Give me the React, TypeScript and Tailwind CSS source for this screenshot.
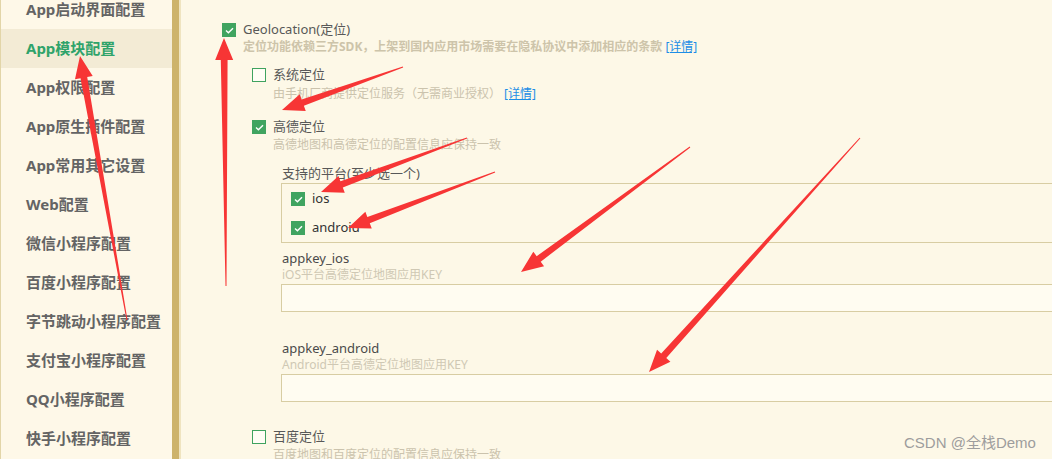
import React from 'react';

const menu = [
  'App启动界面配置',
  'App模块配置',
  'App权限配置',
  'App原生插件配置',
  'App常用其它设置',
  'Web配置',
  '微信小程序配置',
  '百度小程序配置',
  '字节跳动小程序配置',
  '支付宝小程序配置',
  'QQ小程序配置',
  '快手小程序配置',
];

// 红色标注箭头: [尾x, 尾y, 尖x, 尖y]
const arrows: number[][] = [
  [127, 320, 80, 56],
  [226, 286, 224, 38],
  [403, 67, 282, 110],
  [467, 138, 321, 192],
  [495, 172, 348, 228],
  [690, 147, 521, 272],
  [860, 138, 649, 372],
];

function arrowPoints(x1: number, y1: number, x2: number, y2: number) {
  const len = Math.hypot(x2 - x1, y2 - y1);
  const dx = (x2 - x1) / len;
  const dy = (y2 - y1) / len;
  const nx = -dy;
  const ny = dx;
  const headLen = 22;
  const headW = 9;
  const shaftW = 3.4;
  const bx = x2 - dx * headLen;
  const by = y2 - dy * headLen;
  const pts = [
    [x1 + nx * 0.5, y1 + ny * 0.5],
    [bx + nx * shaftW, by + ny * shaftW],
    [bx + nx * headW, by + ny * headW],
    [x2, y2],
    [bx - nx * headW, by - ny * headW],
    [bx - nx * shaftW, by - ny * shaftW],
    [x1 - nx * 0.5, y1 - ny * 0.5],
  ];
  return pts.map((p) => p.join(',')).join(' ');
}

function Check({ on }: { on: boolean }) {
  if (!on) {
    return <span className="block w-[14px] h-[14px] border border-[#3fa35f] bg-[#fffdf5] shrink-0" />;
  }
  return (
    <span className="flex items-center justify-center w-[14px] h-[14px] bg-[#40a460] shrink-0">
      <svg width="9" height="7" viewBox="0 0 9 7">
        <path d="M1 3.5 L3.4 5.8 L8 1.2" fill="none" stroke="#fff" strokeWidth="1.4" />
      </svg>
    </span>
  );
}

function Link() {
  return <span className="text-[#1d8ee6] underline ml-[3px] font-normal">[详情]</span>;
}

export default function App() {
  return (
    <div
      className="relative flex w-[1052px] h-[459px] overflow-hidden bg-[#fdf8e7] text-[13px]"
      style={{ fontFamily: '"Noto Sans", "Noto Sans CJK SC", sans-serif' }}
    >
      {/* 左侧菜单 */}
      <div className="w-[172px] shrink-0 border-l border-[#e2d5a8] bg-[#fef8e8]">
        <div className="-mt-[10px]">
          {menu.map((m, i) => (
            <div
              key={m}
              className={
                'h-[39px] flex items-center pl-[25px] text-[15px] font-bold ' +
                (i === 1 ? 'bg-[#f3ebd5] text-[#2fa36a]' : 'text-[#646464]')
              }
            >
              {m}
            </div>
          ))}
        </div>
      </div>
      <div className="w-[7px] shrink-0 bg-[#cdb36b]" />
      <div className="w-[2px] shrink-0 bg-[#efe4c0]" />

      {/* 主内容 */}
      <div className="flex-1 pt-[22px] pl-[41px] overflow-hidden">
        <div className="flex items-center gap-[7px] h-[16px] text-[#585858]">
          <Check on />
          <span>Geolocation(定位)</span>
        </div>
        <div className="ml-[21px] mt-[1px] h-[16px] leading-[16px] text-[12px] font-bold text-[#cdc4aa] whitespace-nowrap">
          定位功能依赖三方SDK，上架到国内应用市场需要在隐私协议中添加相应的条款
          <Link />
        </div>

        <div className="ml-[30px]">
          <div className="mt-[12px] flex items-center gap-[7px] h-[16px] text-[#585858]">
            <Check on={false} />
            <span>系统定位</span>
          </div>
          <div className="ml-[21px] mt-[3px] h-[16px] leading-[16px] text-[12px] text-[#cbc3ad] whitespace-nowrap">
            由手机厂商提供定位服务（无需商业授权）
            <Link />
          </div>

          <div className="mt-[17px] flex items-center gap-[7px] h-[16px] text-[#585858]">
            <Check on />
            <span>高德定位</span>
          </div>
          <div className="ml-[21px] mt-[2px] h-[16px] leading-[16px] text-[12px] text-[#cbc3ad] whitespace-nowrap">
            高德地图和高德定位的配置信息应保持一致
          </div>

          <div className="ml-[29px] w-[820px]">
            <div className="mt-[12px] h-[16px] leading-[16px] pl-[1px] text-[#585858]">支持的平台(至少选一个)</div>
            <div className="mt-[2px] border border-[#d8cda3] pt-[7px] pb-[6px] pl-[9px] flex flex-col gap-[13px]">
              <div className="flex items-center gap-[7px] h-[16px] text-[#333]">
                <Check on />
                <span>ios</span>
              </div>
              <div className="flex items-center gap-[7px] h-[16px] text-[#333]">
                <Check on />
                <span>android</span>
              </div>
            </div>

            <div className="mt-[7px] h-[16px] leading-[16px] pl-[1px] text-[#4a4a4a]">appkey_ios</div>
            <div className="mt-[1px] h-[16px] leading-[16px] pl-[1px] text-[12px] text-[#cfc8b4]">iOS平台高德定位地图应用KEY</div>
            <div className="mt-[1px] h-[28px] border border-[#d8cda3] bg-[#fffcf1]" />

            <div className="mt-[28px] h-[16px] leading-[16px] pl-[1px] text-[#4a4a4a]">appkey_android</div>
            <div className="mt-[1px] h-[16px] leading-[16px] pl-[1px] text-[12px] text-[#cfc8b4]">Android平台高德定位地图应用KEY</div>
            <div className="mt-[1px] h-[28px] border border-[#d8cda3] bg-[#fffcf1]" />
          </div>

          <div className="mt-[27px] flex items-center gap-[7px] h-[16px] text-[#585858]">
            <Check on={false} />
            <span>百度定位</span>
          </div>
          <div className="ml-[21px] mt-[2px] h-[16px] leading-[16px] text-[12px] text-[#cbc3ad] whitespace-nowrap">
            百度地图和百度定位的配置信息应保持一致
          </div>
        </div>
      </div>

      {/* 标注箭头 */}
      <svg className="absolute left-0 top-0 pointer-events-none" width="1052" height="459">
        {arrows.map((a, i) => (
          <polygon key={i} points={arrowPoints(a[0], a[1], a[2], a[3])} fill="#f73535" />
        ))}
      </svg>

      <div className="absolute left-[904px] top-[432px] text-[15px] text-[#9d9d9d]" style={{ fontFamily: '"Liberation Sans", "Noto Sans CJK SC", sans-serif' }}>
        CSDN @全栈Demo
      </div>
    </div>
  );
}
